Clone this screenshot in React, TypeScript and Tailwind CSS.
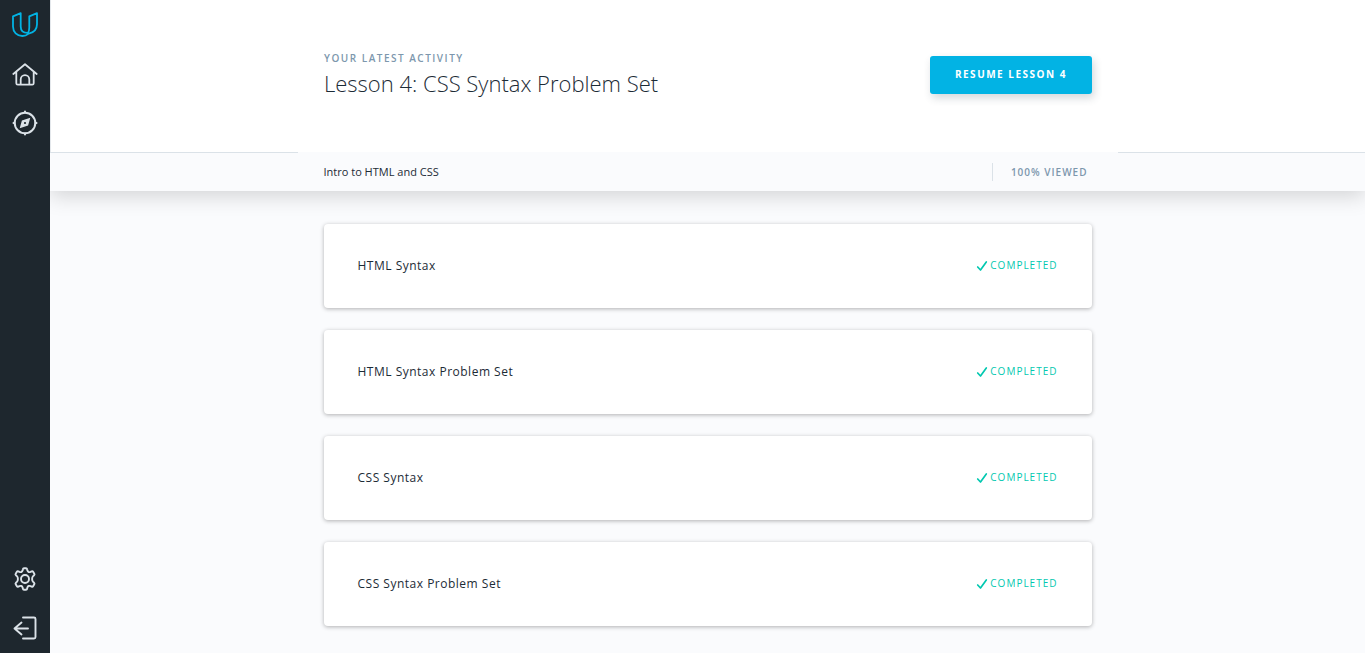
const lessons = [
  'HTML Syntax',
  'HTML Syntax Problem Set',
  'CSS Syntax',
  'CSS Syntax Problem Set',
];

function Logo() {
  return (
    <svg viewBox="0 0 26 26" className="size-[26px]" fill="none" stroke="#02b3e4" strokeWidth="1.8" strokeLinejoin="round" strokeLinecap="round" aria-hidden="true">
      <path d="M1 4.400 8.700 1.200v13.300c0 4.200 2.800 6.400 6.900 6.400M1 4.400v10.100c0 5.600 4 9.500 9.400 9.500 3 0 4.300-.8 6.300-2.400 5-1.100 8.300-4.300 8.300-9.400V1.200l-7.700 3.200v11.100c0 2.600-.4 4.500-1.700 5.700" />
    </svg>
  );
}

function HomeIcon() {
  return (
    <svg viewBox="0 0 26 24" className="h-6 w-[26px]" fill="none" stroke="#dbe2e8" strokeWidth="1.800" strokeLinecap="round" strokeLinejoin="round" aria-hidden="true">
      <path d="M1.300 12 13 2.300 24.700 12M4.300 10v11.200q0 1.500 1.500 1.500h14.400q1.500 0 1.500-1.500V10M8.700 22v-4.500a4.300 4.300 0 0 1 8.600 0V22" />
    </svg>
  );
}

function CompassIcon() {
  return (
    <svg viewBox="0 0 26 26" className="size-[26px]" fill="none" stroke="#dbe2e8" strokeWidth="2" strokeLinecap="round" aria-hidden="true">
      <circle cx="13" cy="13" r="10.300" />
      <path d="M13 1.500v1M13 23.500v1M1.500 13h1M23.500 13h1" />
      <path fillRule="evenodd" fill="#dbe2e8" stroke="none" d="m18.300 7.700-2.200 7.800-8.400 2.800 2.200-7.800 8.400-2.800Zm-5.300 4.200a1.100 1.100 0 1 0 0 2.200 1.100 1.100 0 0 0 0-2.200Z" />
    </svg>
  );
}

function GearIcon() {
  return (
    <svg viewBox="0 0 24 24" className="size-6" fill="none" stroke="#dbe2e8" strokeWidth="1.900" strokeLinejoin="round" aria-hidden="true">
      <path d="M9.900 2.300q.2-1 1.100-1h2q.9 0 1.100 1l.3 1.300q.3 1 1.300 1.400.9.300 1.800-.1l1.200-.6q.9-.4 1.400.4l1.200 2q.5.800-.2 1.500l-1 .9q-1 .9-1 2.900t1 2.900l1 .9q.7.700.2 1.500l-1.200 2q-.5.800-1.400.4l-1.200-.6q-.9-.4-1.800-.1-1 .4-1.300 1.400l-.3 1.300q-.2 1-1.100 1h-2q-.9 0-1.100-1l-.3-1.300q-.3-1-1.300-1.400-.9-.3-1.800.1l-1.200.6q-.9.400-1.400-.4l-1.200-2q-.5-.8.200-1.500l1-.9q1-.9 1-2.900t-1-2.900l-1-.9Q2.200 7.500 2.700 6.700l1.200-2q.5-.8 1.400-.4l1.200.6q.9.400 1.800.1 1-.4 1.300-1.400Z" />
      <circle cx="12" cy="12" r="4" />
    </svg>
  );
}

function ExitIcon() {
  return (
    <svg viewBox="0 0 24 24" className="size-6" fill="none" stroke="#dbe2e8" strokeWidth="1.900" strokeLinecap="round" strokeLinejoin="round" aria-hidden="true">
      <path d="M10 1.500h11q1.500 0 1.500 1.500v18q0 1.500-1.500 1.500H10M15 12.500H1.500M8.500 6.500l-7 6 7 6" />
    </svg>
  );
}

function CheckIcon() {
  return (
    <svg viewBox="0 0 12 12" className="size-3" fill="none" stroke="#02c8b0" strokeWidth="1.700" strokeLinecap="round" strokeLinejoin="round" aria-hidden="true">
      <path d="m1.700 7 2.800 3L10.300 2" />
    </svg>
  );
}

export default function App() {
  return (
    <div className="flex min-h-screen bg-[#fafbfd] font-['Open_Sans','Noto_Sans',sans-serif] text-[#1c2b36]">
      <nav aria-label="Main" className="z-10 flex w-[50px] shrink-0 flex-col items-center justify-between bg-[#1e272e] pt-3 pr-px pb-[14px]">
        <div className="flex flex-col items-center gap-6">
          <a href="#" aria-label="Udacity"><Logo /></a>
          <a href="#" aria-label="Home"><HomeIcon /></a>
          <a href="#" aria-label="Explore"><CompassIcon /></a>
        </div>
        <div className="flex flex-col items-center gap-[25px]">
          <a href="#" aria-label="Settings"><GearIcon /></a>
          <a href="#" aria-label="Log out"><ExitIcon /></a>
        </div>
      </nav>

      <div className="min-w-0 flex-1">
        <header className="shadow-[0_5px_20px_rgba(0,0,0,0.16)]">
          <div className="border-l border-[#e4e8ec] bg-white pt-[50px] pb-[52px]">
            <div className="mx-auto flex max-w-3xl items-center justify-between">
              <div>
                <p className="text-[10px] leading-4 font-semibold tracking-[1.500px] text-[#7d97ad] uppercase">Your latest activity</p>
                <h1 className="text-[22px] leading-[34px] font-light">Lesson 4: CSS Syntax Problem Set</h1>
              </div>
              <button type="button" className="h-[38px] rounded-[3px] bg-[#02b3e4] px-[25px] pb-px text-[10px] font-bold tracking-[1.500px] text-white uppercase shadow-[2px_4px_8px_rgba(46,61,73,0.2)]">
                Resume Lesson 4
              </button>
            </div>
          </div>
          <div className="flex h-[39px] bg-[#fafbfd]">
            <div className="flex-1 border-t border-[#dbe2e8]" />
            <div className="flex w-[820px] items-center justify-between px-[26px]">
              <h2 className="text-[11px] leading-4">Intro to HTML and CSS</h2>
              <p className="border-l border-[#dbe2e8] pr-1 pl-[18px] text-[10px] leading-[18px] font-semibold tracking-[1px] text-[#7d97ad] uppercase">100% viewed</p>
            </div>
            <div className="flex-1 border-t border-[#dbe2e8]" />
          </div>
        </header>

        <main className="mx-auto max-w-3xl pt-[33px] pb-7">
          <ul className="flex flex-col gap-[22px]">
            {lessons.map((title) => (
              <li key={title}>
                <a href="#" className="flex h-[84px] items-center justify-between rounded bg-white px-[34px] pb-px shadow-[0_1px_4px_rgba(0,0,0,0.3)]">
                  <span className="text-xs tracking-[0.500px]">{title}</span>
                  <span className="flex items-center gap-[2px] text-[10px] font-medium tracking-[1px] text-[#02c8b0] uppercase">
                    <CheckIcon />
                    Completed
                  </span>
                </a>
              </li>
            ))}
          </ul>
        </main>
      </div>
    </div>
  );
}
